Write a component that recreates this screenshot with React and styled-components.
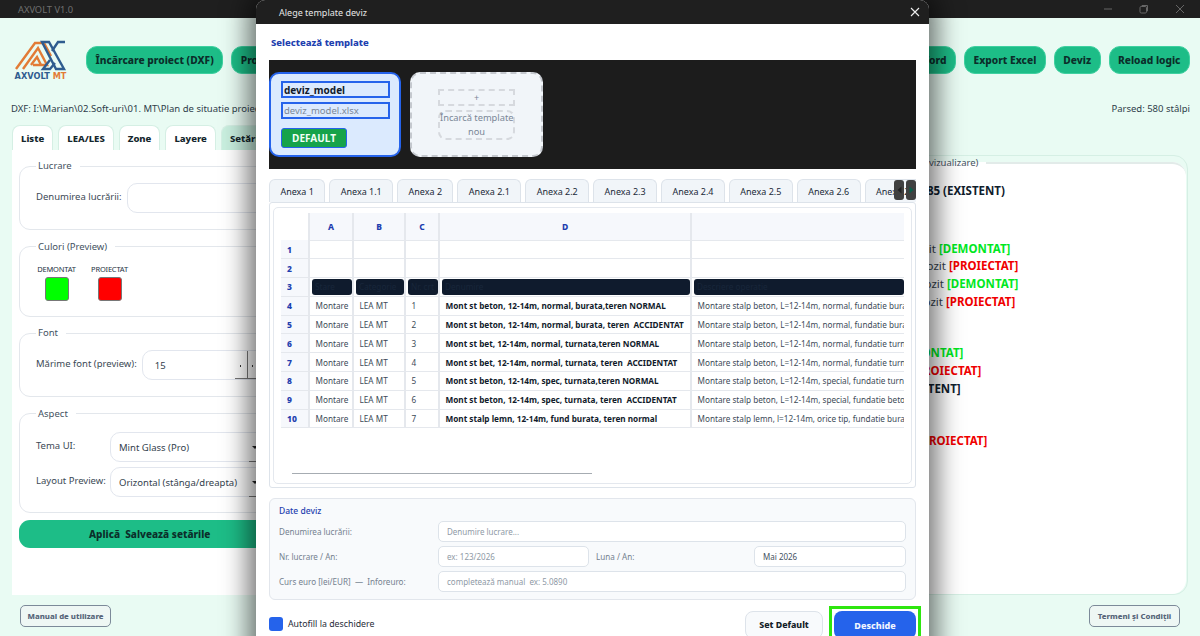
import React from 'react'
import styled, { createGlobalStyle } from 'styled-components'

const Global = createGlobalStyle`
html, body { margin: 0; padding: 0; height: 100%; overflow: hidden; }
body { font-family: "Noto Sans", "Open Sans", sans-serif; background: #e9fbf3; }
* { box-sizing: border-box; }
`

const tabs = ['Anexa 1', 'Anexa 1.1', 'Anexa 2', 'Anexa 2.1', 'Anexa 2.2', 'Anexa 2.3', 'Anexa 2.4', 'Anexa 2.5', 'Anexa 2.6', 'Anexa 2.7']

const rows = [
  ['4', '1', 'Mont st beton, 12-14m, normal, burata,teren NORMAL', 'Montare stalp beton, L=12-14m, normal, fundatie burata, teren normal'],
  ['5', '2', 'Mont st beton, 12-14m, normal, burata, teren  ACCIDENTAT', 'Montare stalp beton, L=12-14m, normal, fundatie burata, teren accidentat'],
  ['6', '3', 'Mont st bet, 12-14m, normal, turnata,teren NORMAL', 'Montare stalp beton, L=12-14m, normal, fundatie turnata, teren normal'],
  ['7', '4', 'Mont st bet, 12-14m, normal, turnata, teren  ACCIDENTAT', 'Montare stalp beton, L=12-14m, normal, fundatie turnata, teren accidentat'],
  ['8', '5', 'Mont st beton, 12-14m, spec, turnata,teren NORMAL', 'Montare stalp beton, L=12-14m, special, fundatie turnata, teren normal'],
  ['9', '6', 'Mont st beton, 12-14m, spec, turnata, teren  ACCIDENTAT', 'Montare stalp beton, L=12-14m, special, fundatie beton, teren accidentat'],
  ['10', '7', 'Mont stalp lemn, 12-14m, fund burata, teren normal', 'Montare stalp lemn, l=12-14m, orice tip, fundatie burata, teren normal'],
]

const Logo = () => (
  <LogoBox>
    <svg width="54" height="31" viewBox="0 0 54 31" fill="none">
      <g stroke="#e27b36" strokeWidth="2.4">
        <path d="M2 29 L21 3 H30 L37 16" />
        <path d="M9 29 L24 8 L33 25 H19" />
        <path d="M17 25 L23 17 L27 25" />
      </g>
      <g stroke="#2f5c8f" strokeWidth="2.4">
        <path d="M28 2 H35 L50 29 H42 Z" />
        <path d="M51 2 H44 L38 11" />
        <path d="M36 20 L29 29 H36 L41 23" />
      </g>
    </svg>
    <LogoText>AXVOLT <span>MT</span></LogoText>
  </LogoBox>
)

const App = () => {
  return (
    <Page>
      <Global />
      <TitleBar>
        <AppName>AXVOLT V1.0</AppName>
        <WinControls>
          <svg width="10" height="10" viewBox="0 0 10 10"><path d="M1 5h8" stroke="#666" /></svg>
          <svg width="10" height="10" viewBox="0 0 10 10" fill="none"><rect x="1" y="2.5" width="6.5" height="6.5" rx="1.2" stroke="#666" /><path d="M3 2.5V1.500h5.500V7H7.500" stroke="#666" /></svg>
          <svg width="10" height="10" viewBox="0 0 10 10"><path d="M1 1l8 8M9 1l-8 8" stroke="#666" /></svg>
        </WinControls>
      </TitleBar>

      <Header>
        <Logo />
        <ButtonGroup>
          <TopButton>Încărcare proiect (DXF)</TopButton>
          <TopButton>Proiect nou</TopButton>
        </ButtonGroup>
        <ButtonGroup $right>
          <TopButton>Export Word</TopButton>
          <TopButton>Export Excel</TopButton>
          <TopButton>Deviz</TopButton>
          <TopButton>Reload logic</TopButton>
        </ButtonGroup>
      </Header>

      <PathRow>
        <span>DXF: I:\Marian\02.Soft-uri\01. MT\Plan de situatie proiect.dxf</span>
        <span>Parsed: 580 stâlpi</span>
      </PathRow>

      <Split>
        <LeftSide>
          <SideTabs>
            <SideTab>Liste</SideTab>
            <SideTab>LEA/LES</SideTab>
            <SideTab>Zone</SideTab>
            <SideTab>Layere</SideTab>
            <SideTab $active>Setări</SideTab>
          </SideTabs>
          <SidePanel>
            <Group $h={71}>
              <Legend>Lucrare</Legend>
              <FieldRow>
                <FieldLabel>Denumirea lucrării:</FieldLabel>
                <FieldBox />
              </FieldRow>
            </Group>
            <Group $h={77}>
              <Legend>Culori (Preview)</Legend>
              <Swatches>
                <Swatch><small>DEMONTAT</small><i style={{ background: '#00ff00' }} /></Swatch>
                <Swatch><small>PROIECTAT</small><i style={{ background: '#ff0000' }} /></Swatch>
              </Swatches>
            </Group>
            <Group $h={71}>
              <Legend>Font</Legend>
              <FieldRow>
                <FieldLabel>Mărime font (preview):</FieldLabel>
                <FieldBox $pad={12}>15<SpinMark /></FieldBox>
              </FieldRow>
            </Group>
            <Group $h={106}>
              <Legend>Aspect</Legend>
              <FieldRow $top={11}>
                <FieldLabel $w={69}>Tema UI:</FieldLabel>
                <FieldBox>Mint Glass (Pro)<DropMark /></FieldBox>
              </FieldRow>
              <FieldRow $top={5}>
                <FieldLabel $w={69}>Layout Preview:</FieldLabel>
                <FieldBox>Orizontal (stânga/dreapta)<DropMark /></FieldBox>
              </FieldRow>
            </Group>
            <ApplyButton>Aplică  Salvează setările</ApplyButton>
          </SidePanel>
        </LeftSide>
        <PreviewPanel>
          <PreviewSet>
            <PreviewTitle>Preview (vizualizare)</PreviewTitle>
            <PreviewRow $top={12} $left={262} $bold>Stâlp 85 (EXISTENT)</PreviewRow>
            <PreviewRow $top={40} $left={233}>Stâlp depozit <Tag $c="#00e81f">[DEMONTAT]</Tag></PreviewRow>
            <PreviewRow $left={243}>Stâlp depozit <Tag $c="#f00000">[PROIECTAT]</Tag></PreviewRow>
            <PreviewRow $left={241}>Stâlp depozit <Tag $c="#00e81f">[DEMONTAT]</Tag></PreviewRow>
            <PreviewRow $left={240}>Stâlp depozit <Tag $c="#f00000">[PROIECTAT]</Tag></PreviewRow>
            <PreviewRow $top={34} $left={259}><Tag $c="#00e81f">[DEMONTAT]</Tag></PreviewRow>
            <PreviewRow $left={279}><Tag $c="#f00000">[PROIECTAT]</Tag></PreviewRow>
            <PreviewRow $left={266} $bold>[EXISTENT]</PreviewRow>
            <PreviewRow $top={34} $left={285}><Tag $c="#f00000">[PROIECTAT]</Tag></PreviewRow>
          </PreviewSet>
        </PreviewPanel>
      </Split>

      <BottomBar>
        <SmallButton>Manual de utilizare</SmallButton>
        <SmallButton>Termeni și Condiții</SmallButton>
      </BottomBar>

      <Modal>
        <ModalTitle>
          <span>Alege template deviz</span>
          <svg width="10" height="10" viewBox="0 0 10 10"><path d="M1 1l8 8M9 1l-8 8" stroke="#eee" strokeWidth="1.1" /></svg>
        </ModalTitle>
        <ModalBody>
          <SectionTitle>Selectează template</SectionTitle>
          <TemplateStrip>
            <TemplateCard>
              <CardName $bold>deviz_model</CardName>
              <CardName>deviz_model.xlsx</CardName>
              <DefaultBadge>DEFAULT</DefaultBadge>
            </TemplateCard>
            <UploadCard>
              <UploadPlus>+</UploadPlus>
              <UploadLabel>Încarcă template<br />nou</UploadLabel>
            </UploadCard>
          </TemplateStrip>

          <SheetTabs>
            {tabs.map((t) => <SheetTab key={t}>{t}</SheetTab>)}
            <TabArrows>
              <TabArrow><svg width="5" height="8" viewBox="0 0 5 8"><path d="M4.500 0.500v7L0.500 4z" fill="#222" /></svg></TabArrow>
              <TabArrow><svg width="5" height="8" viewBox="0 0 5 8"><path d="M0.500 0.500v7L4.500 4z" fill="#0c5c49" /></svg></TabArrow>
            </TabArrows>
          </SheetTabs>

          <SheetFrame>
            <SheetInner>
              <Sheet>
                <colgroup>
                  <col width="28" /><col width="44" /><col width="52" /><col width="34" /><col width="252" /><col width="213" />
                </colgroup>
                <thead>
                  <tr>
                    <Corner />
                    <ColHead>A</ColHead>
                    <ColHead>B</ColHead>
                    <ColHead>C</ColHead>
                    <ColHead>D</ColHead>
                    <ColHead />
                  </tr>
                </thead>
                <tbody>
                  <tr><RowHead>1</RowHead><Cell /><Cell /><Cell /><Cell /><Cell /></tr>
                  <tr><RowHead>2</RowHead><Cell /><Cell /><Cell /><Cell /><Cell /></tr>
                  <tr>
                    <RowHead>3</RowHead>
                    <Cell><DarkPill>Stare</DarkPill></Cell>
                    <Cell><DarkPill>Categorie</DarkPill></Cell>
                    <Cell><DarkPill>Nr. crt</DarkPill></Cell>
                    <Cell><DarkPill>Denumire</DarkPill></Cell>
                    <Cell><DarkPill>Descriere operatie</DarkPill></Cell>
                  </tr>
                  {rows.map((r) => (
                    <tr key={r[0]}>
                      <RowHead>{r[0]}</RowHead>
                      <Cell>Montare</Cell>
                      <Cell>LEA MT</Cell>
                      <Cell>{r[1]}</Cell>
                      <Cell $bold>{r[2]}</Cell>
                      <Cell>{r[3]}</Cell>
                    </tr>
                  ))}
                </tbody>
              </Sheet>
              <ScrollThumb />
            </SheetInner>
          </SheetFrame>

          <DateBox>
            <DateTitle>Date deviz</DateTitle>
            <DateRow>
              <DateLabel>Denumirea lucrării:</DateLabel>
              <DateInput $ph>Denumire lucrare...</DateInput>
            </DateRow>
            <DateRow>
              <DateLabel>Nr. lucrare / An:</DateLabel>
              <DateInput $ph $w={151}>ex: 123/2026</DateInput>
              <DateLabel $w={165} $pad={7}>Luna / An:</DateLabel>
              <DateInput>Mai 2026</DateInput>
            </DateRow>
            <DateRow>
              <DateLabel>Curs euro [lei/EUR]  —  Inforeuro:</DateLabel>
              <DateInput $ph>completează manual  ex: 5.0890</DateInput>
            </DateRow>
          </DateBox>

          <Footer>
            <Check />
            <CheckLabel>Autofill la deschidere</CheckLabel>
            <GhostButton>Set Default</GhostButton>
            <FocusFrame>
              <OpenButton>Deschide</OpenButton>
            </FocusFrame>
          </Footer>
        </ModalBody>
      </Modal>
    </Page>
  )
}

export default App

const Page = styled.div`
position: relative;
width: 1200px;
height: 636px;
overflow: hidden;
display: flex;
flex-direction: column;
background-color: #e9fbf3;
color: #24323f;
`
const TitleBar = styled.div`
height: 18px;
flex: none;
background-color: #1f1f1f;
display: flex;
align-items: center;
justify-content: space-between;
padding: 0 15px 0 18px;
`
const AppName = styled.span`
font-size: 9.300px;
color: #6f6f6f;
`
const WinControls = styled.div`
display: flex;
gap: 26px;
align-items: center;
`
const Header = styled.div`
height: 80px;
flex: none;
display: flex;
align-items: flex-start;
padding: 28px 10px 0 13px;
gap: 18px;
`
const LogoBox = styled.div`
width: 55px;
flex: none;
display: flex;
flex-direction: column;
align-items: center;
margin-top: -6px;
`
const LogoText = styled.div`
font-family: "DejaVu Sans", sans-serif;
font-size: 8.200px;
font-weight: 700;
line-height: 10px;
color: #2f5c8f;
white-space: nowrap;
margin-top: 0;
span { color: #e27b36; }
`
const ButtonGroup = styled.div`
display: flex;
gap: 8px;
margin-left: ${({ $right }) => ($right ? 'auto' : '0')};
`
const TopButton = styled.button`
height: 28px;
padding: 0 8.500px;
border: 1px solid #3fd0a0;
border-radius: 11px;
background-color: #1dbd87;
color: #0b2e2a;
font-family: "Noto Sans", sans-serif;
font-size: 10.200px;
font-weight: 800;
white-space: nowrap;
`
const PathRow = styled.div`
height: 20px;
flex: none;
margin-bottom: 7px;
display: flex;
justify-content: space-between;
padding: 0 10px 0 11px;
align-items: center;
font-size: 9.500px;
color: #2f3d4a;
`
const Split = styled.div`
flex: none;
height: 470px;
display: flex;
padding: 0 12px;
`
const LeftSide = styled.div`
width: 620px;
flex: none;
display: flex;
flex-direction: column;
`
const SideTabs = styled.div`
display: flex;
gap: 5px;
height: 25px;
`
const SideTab = styled.div`
height: 26px;
padding: 0 8px;
display: flex;
align-items: center;
background-color: ${({ $active }) => ($active ? '#c9efdf' : '#ffffff')};
border: 1px solid #d5efe4;
border-bottom: none;
border-radius: 8px 8px 0 0;
font-size: 9.500px;
font-weight: 800;
color: #14262c;
`
const SidePanel = styled.div`
height: 445px;
background-color: #ffffff;
padding: 9px 7px 0;
display: flex;
flex-direction: column;
gap: 9.500px;
`
const Group = styled.fieldset`
margin: 0;
padding: 0 10px 0 16px;
flex: none;
height: ${({ $h }) => $h}px;
border: 1px solid #e3e7ec;
border-radius: 11px;
`
const Legend = styled.legend`
font-size: 9.500px;
line-height: 14px;
padding: 0 8px 0 2px;
color: #44525f;
`
const FieldRow = styled.div`
display: flex;
align-items: center;
gap: 5px;
margin-top: ${({ $top }) => $top || 10}px;
`
const FieldLabel = styled.div`
font-size: 9.500px;
color: #3b4955;
white-space: nowrap;
margin-top: -3px;
width: ${({ $w }) => ($w ? `${$w}px` : 'auto')};
`
const FieldBox = styled.div`
position: relative;
flex: 1;
height: 30px;
border: 1px solid #e2e6ee;
border-radius: 10px;
display: flex;
align-items: center;
padding: 1px ${({ $pad }) => $pad || 8}px 0;
font-size: 9.500px;
color: #33414d;
background-color: #fff;
`
const SpinMark = styled.span`
position: absolute;
top: 0;
left: 104px;
width: 1px;
height: 28px;
background-color: #777;
&::before { content: ""; position: absolute; bottom: 0; left: -12px; width: 30px; height: 1px; background-color: #777; }
&::after { content: ""; position: absolute; top: 14px; left: -7px; width: 22px; height: 1.500px; background: linear-gradient(90deg, #333 1.500px, transparent 1.500px, transparent 12px, #333 12px, #333 13.500px, transparent 13.500px); }
`
const DropMark = styled.span`
position: absolute;
top: 13px;
left: 141px;
border-left: 3px solid transparent;
border-right: 3px solid transparent;
border-top: 3px solid #222;
&::after { content: ""; position: absolute; top: 12px; left: -6px; width: 16px; height: 1px; background-color: #777; }
`
const Swatches = styled.div`
display: flex;
gap: 12px;
margin-top: 10px;
`
const Swatch = styled.div`
display: flex;
flex-direction: column;
align-items: center;
width: 41px;
gap: 3px;
small { font-size: 7.500px; line-height: 10px; letter-spacing: -0.2px; color: #24323f; white-space: nowrap; }
i { display: block; width: 24px; height: 24px; border-radius: 3px; border: 1px solid #777; }
`
const ApplyButton = styled.div`
height: 28px;
margin-top: -2px;
flex: none;
border-radius: 11px;
background-color: #1dbd87;
padding-left: 70px;
display: flex;
align-items: center;
white-space: pre;
font-size: 10px;
font-weight: 800;
color: #0b2e2a;
`
const PreviewPanel = styled.div`
flex: 1;
height: 440px;
margin-top: 30px;
border: 1px solid #d5efe4;
border-radius: 14px;
padding: 0 1px 0 0;
`
const PreviewSet = styled.fieldset`
margin: 0;
padding: 0;
height: 100%;
border: none;
border-top: 2px solid #e2ebe9;
border-radius: 14px;
background-color: #ffffff;
font-size: 11.500px;
color: #33414d;
`
const PreviewTitle = styled.legend`
margin-left: 252px;
padding: 0 8px 0 4px;
font-size: 9.500px;
line-height: 14px;
color: #44525f;
`
const PreviewRow = styled.div`
height: 17.700px;
line-height: 17.700px;
margin-top: ${({ $top }) => $top || 0}px;
padding-left: ${({ $left }) => $left}px;
font-weight: ${({ $bold }) => ($bold ? 700 : 400)};
color: ${({ $bold }) => ($bold ? '#10202c' : '#33414d')};
white-space: nowrap;
`
const Tag = styled.b`
color: ${({ $c }) => $c};
`
const BottomBar = styled.div`
flex: none;
display: flex;
justify-content: space-between;
padding: 0 20px;
margin-top: 10px;
`
const SmallButton = styled.div`
width: 91px;
height: 22px;
border: 1px solid #7c8a99;
border-radius: 5px;
background-color: #eef7f4;
display: flex;
align-items: center;
justify-content: center;
font-size: 7.800px;
font-weight: 800;
color: #566579;
white-space: nowrap;
`
const Modal = styled.div`
position: absolute;
top: 0;
left: 256px;
width: 673px;
height: 660px;
background-color: #ffffff;
border-radius: 9px 9px 0 0;
box-shadow: 0 0 26px 8px rgba(0, 0, 0, 0.55);
display: flex;
flex-direction: column;
`
const ModalTitle = styled.div`
height: 24px;
flex: none;
background-color: #1f1f1f;
border-radius: 9px 9px 0 0;
display: flex;
align-items: center;
justify-content: space-between;
padding: 0 9px 0 23px;
font-size: 9px;
color: #e6e6e6;
`
const ModalBody = styled.div`
flex: 1;
padding: 0 13px;
display: flex;
flex-direction: column;
`
const SectionTitle = styled.div`
height: 36px;
flex: none;
display: flex;
align-items: center;
padding: 1px 2px 0;
font-size: 9.500px;
font-weight: 800;
color: #1e40af;
`
const TemplateStrip = styled.div`
height: 109px;
flex: none;
background-color: #1c1c1c;
display: flex;
align-items: flex-start;
gap: 9px;
padding-top: 12px;
`
const TemplateCard = styled.div`
width: 132px;
height: 85px;
background-color: #dbeafe;
border: 2px solid #2563eb;
border-radius: 10px;
padding: 7px 9px 0 10px;
display: flex;
flex-direction: column;
gap: 4px;
`
const CardName = styled.div`
height: 17px;
flex: none;
border: 2px solid #2563eb;
padding: 0 1px;
display: flex;
align-items: center;
font-size: ${({ $bold }) => ($bold ? '10px' : '9.500px')};
font-weight: ${({ $bold }) => ($bold ? 700 : 400)};
color: ${({ $bold }) => ($bold ? '#111b2b' : '#7a8797')};
`
const DefaultBadge = styled.div`
width: 66px;
height: 20px;
margin-top: 5px;
background-color: #16a34a;
border: 1px solid #2563eb;
border-radius: 3px;
color: #f2fff7;
font-size: 10px;
font-weight: 700;
display: flex;
align-items: center;
justify-content: center;
`
const UploadCard = styled.div`
width: 133px;
height: 85px;
background-color: #f1f5f9;
border: 2px dashed #c4c8ce;
border-radius: 10px;
padding: 15px 26px 0;
display: flex;
flex-direction: column;
gap: 4px;
`
const UploadPlus = styled.div`
height: 17px;
flex: none;
border: 2px dashed #d6d9de;
display: flex;
align-items: center;
justify-content: center;
font-size: 9px;
color: #7a8797;
`
const UploadLabel = styled.div`
height: 30px;
flex: none;
border: 2px dashed #d6d9de;
border-radius: 8px;
text-align: center;
font-size: 9.300px;
line-height: 14px;
color: #7a8797;
white-space: nowrap;
display: flex;
flex-direction: column;
justify-content: center;
`
const SheetTabs = styled.div`
position: relative;
flex: none;
margin-top: 10px;
height: 23px;
display: flex;
gap: 4px;
overflow: hidden;
`
const SheetTab = styled.div`
flex: none;
height: 24px;
padding: 0 10.400px;
background-color: #f1f5f9;
border: 1px solid #dde3ea;
border-bottom: none;
border-radius: 6px 6px 0 0;
display: flex;
align-items: center;
font-size: 9px;
color: #1b2a38;
`
const TabArrows = styled.div`
position: absolute;
top: 1px;
right: 0;
display: flex;
gap: 2px;
`
const TabArrow = styled.div`
width: 10px;
height: 20px;
border-radius: 3px;
background-color: #404040;
display: flex;
align-items: center;
justify-content: center;
`
const SheetFrame = styled.div`
flex: none;
height: 286px;
border: 1px solid #dde3ea;
padding: 4px 3px 3px;
border-radius: 3px;
`
const SheetInner = styled.div`
position: relative;
height: 100%;
border: 1px solid #e4e8ee;
border-radius: 5px;
padding: 5px 7px;
overflow: hidden;
`
const Sheet = styled.table`
table-layout: fixed;
width: 623px;
border-collapse: collapse;
font-size: 8.200px;
color: #3c4a57;
`
const Corner = styled.th`
height: 27px;
background-color: #ffffff;
border-right: 2px solid #e5e8ed;
`
const ColHead = styled.th`
height: 27px;
background-color: #f6f8fc;
border-right: 2px solid #e5e8ed;
border-bottom: 1px solid #e5e8ed;
color: #1e40af;
font-size: 8.500px;
font-weight: 800;
&:last-child { border-right: none; }
`
const RowHead = styled.td`
height: 18.800px;
padding: 0 0 0 6px;
background-color: #f6f8fc;
border-bottom: 1px solid #e5e8ed;
border-right: 2px solid #e5e8ed;
color: #1e40af;
font-size: 8.500px;
font-weight: 800;
`
const Cell = styled.td`
height: 18.800px;
padding: 0 0 0 5.500px;
border-bottom: 1px solid #e5e8ed;
border-right: 2px solid #e5e8ed;
white-space: pre;
overflow: hidden;
font-weight: ${({ $bold }) => ($bold ? 700 : 400)};
color: ${({ $bold }) => ($bold ? '#111b2b' : '#3c4a57')};
&:has(> div) { padding: 0 0 0 2px; }
&:last-child { border-right: none; }
`
const DarkPill = styled.div`
height: 16px;
line-height: 16px;
background-color: #0f1b2d;
border-radius: 3px;
padding-left: 3px;
color: #18263a;
font-size: 8.200px;
overflow: hidden;
`
const ScrollThumb = styled.div`
position: absolute;
left: 18px;
bottom: 9px;
width: 300px;
height: 1px;
background-color: #a6acb2;
`
const DateBox = styled.div`
flex: none;
margin-top: 10px;
height: 102px;
border: 1px solid #e2e6ec;
border-radius: 6px;
background-color: #f8fafc;
padding: 5px 9px 0 9px;
display: flex;
flex-direction: column;
gap: 4px;
`
const DateTitle = styled.div`
height: 13px;
font-size: 8.500px;
font-weight: 500;
color: #1e40af;
line-height: 13px;
`
const DateRow = styled.div`
display: flex;
align-items: center;
`
const DateLabel = styled.div`
flex: none;
width: ${({ $w }) => $w || 159}px;
padding-left: ${({ $pad }) => $pad || 0}px;
font-size: 8.100px;
color: #74818f;
white-space: pre;
`
const DateInput = styled.div`
flex: ${({ $w }) => ($w ? `0 0 ${$w}px` : '1')};
height: 21px;
background-color: #fff;
border: 1px solid #dde3ea;
border-radius: 5px;
padding: 0 8px;
display: flex;
align-items: center;
font-size: 8px;
white-space: pre;
color: ${({ $ph }) => ($ph ? '#8f9aa6' : '#45525f')};
`
const Footer = styled.div`
flex: none;
margin-top: 11px;
height: 29px;
display: flex;
align-items: flex-start;
`
const Check = styled.div`
width: 14px;
height: 14px;
margin-top: 6px;
border-radius: 3px;
background-color: #2563eb;
`
const CheckLabel = styled.div`
margin: 6px auto 0 5px;
font-size: 8.800px;
line-height: 14px;
color: #1f2c38;
`
const GhostButton = styled.div`
width: 78px;
height: 28px;
border: 1px solid #dde3ea;
border-radius: 8px;
background-color: #f8fafc;
display: flex;
align-items: center;
justify-content: center;
font-size: 8.800px;
font-weight: 800;
color: #141d27;
`
const FocusFrame = styled.div`
flex: none;
margin: -5px 0 0 6px;
margin-right: -5px;
border: 3px solid #2ee60e;
padding: 2px;
`
const OpenButton = styled.div`
width: 82px;
height: 28px;
border-radius: 8px;
background-color: #2563eb;
display: flex;
align-items: center;
justify-content: center;
font-size: 9px;
font-weight: 800;
color: #f2f6ff;
`
